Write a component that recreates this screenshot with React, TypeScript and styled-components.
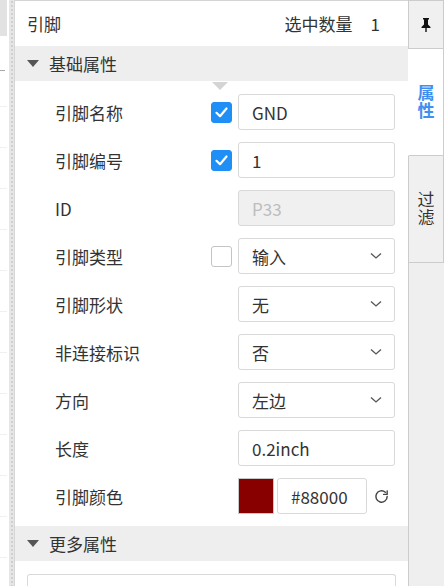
import styled, { createGlobalStyle } from "styled-components";

const GlobalStyle = createGlobalStyle`
  html, body {
    margin: 0;
    padding: 0;
    background: #ffffff;
  }
  body {
    font-family: "Noto Sans CJK SC", "Noto Sans", "Liberation Sans", sans-serif;
    color: #333333;
  }
  * { box-sizing: border-box; }
`;

const Page = styled.div`
  display: flex;
  width: 444px;
  height: 586px;
  overflow: hidden;
  background: #ffffff;
`;

const LeftStrip = styled.div`
  width: 9px;
  display: flex;
  flex-direction: column;
  flex-shrink: 0;
  & > * { flex-shrink: 0; }
`;

const StripTop = styled.div`
  height: 36px;
  width: 7px;
  background: #e2e2e2;
`;

const StripMark = styled.div`
  margin-top: 34px;
  height: 1px;
  width: 5px;
  background: #a8a8a8;
`;

const StripLine = styled.div<{ $first?: boolean }>`
  margin-top: ${(p) => (p.$first ? "35px" : "40px")};
  height: 1px;
  width: 7px;
  background: #f0f0f0;
`;

const Splitter = styled.div`
  width: 6px;
  flex-shrink: 0;
  background-color: #e6e6e6;
  background-image: radial-gradient(circle, #cfcfcf 1px, transparent 1.2px);
  background-size: 6px 4px;
  border-right: 1px solid #d6d6d6;
`;

const Panel = styled.div`
  position: relative;
  flex: 1;
  display: flex;
  flex-direction: column;
  border-top: 1px solid #d4d4d4;
  overflow: hidden;
  & > * { flex-shrink: 0; }
`;

const Header = styled.div`
  height: 45px;
  display: flex;
  align-items: center;
  justify-content: space-between;
  padding: 0 28px 0 12px;
  font-size: 17px;
`;

const Count = styled.div`
  display: flex;
  gap: 18px;
`;

const SectionHeader = styled.div`
  height: 35px;
  display: flex;
  align-items: center;
  gap: 10px;
  padding-left: 12px;
  background: #eeeeee;
  font-size: 17px;
  color: #333;
`;

const Caret = styled.span`
  width: 0;
  height: 0;
  border-left: 6px solid transparent;
  border-right: 6px solid transparent;
  border-top: 7px solid #555;
`;

const Pointer = styled.span`
  position: absolute;
  left: 197px;
  top: 81px;
  width: 0;
  height: 0;
  border-left: 8px solid transparent;
  border-right: 8px solid transparent;
  border-top: 8px solid #d4d4d4;
`;

const Body = styled.div`
  display: flex;
  flex-direction: column;
  gap: 12px;
  padding: 13px 12px 12px 40px;
`;

const Row = styled.div`
  display: flex;
  align-items: center;
  height: 36px;
`;

const Label = styled.div`
  width: 156px;
  font-size: 17px;
  color: #333;
`;

const CheckSlot = styled.div`
  width: 27px;
  display: flex;
`;

const Check = styled.span<{ $on?: boolean }>`
  width: 21px;
  height: 21px;
  border-radius: 3px;
  display: flex;
  align-items: center;
  justify-content: center;
  background: ${(p) => (p.$on ? "#1f8ff5" : "#ffffff")};
  border: 1px solid ${(p) => (p.$on ? "#1f8ff5" : "#c4c4c4")};
`;

const Field = styled.div<{ $disabled?: boolean; $width?: number }>`
  width: ${(p) => p.$width ?? 157}px;
  height: 36px;
  display: flex;
  align-items: center;
  gap: 6px;
  padding: 0 12px 0 13px;
  border: 1px solid #d9d9d9;
  border-radius: 3px;
  font-size: 17px;
  background: ${(p) => (p.$disabled ? "#f0f0f0" : "#ffffff")};
  color: ${(p) => (p.$disabled ? "#bdbdbd" : "#333")};
  white-space: nowrap;
`;

const Value = styled.span`
  flex: 1;
  min-width: 0;
  overflow: hidden;
`;

const Swatch = styled.div`
  width: 36px;
  height: 36px;
  background: #880000;
  border: 1px solid #c8c8c8;
  margin-right: 3px;
`;

const ResetButton = styled.span`
  margin-left: 6px;
  display: flex;
  color: #444;
`;

const MoreBox = styled.div`
  margin: 13px 12px 0 12px;
  height: 40px;
  border: 1px solid #d9d9d9;
  border-bottom: none;
  border-radius: 3px 3px 0 0;
`;

const TabColumn = styled.div`
  width: 36px;
  flex-shrink: 0;
  display: flex;
  flex-direction: column;
  background: #efefef;
  border-left: 1px solid #cccccc;
  & > * { flex-shrink: 0; }
`;

const PinBox = styled.div`
  height: 49px;
  margin-left: -1px;
  display: flex;
  align-items: center;
  justify-content: center;
  background: #f0f0f0;
  border: 1px solid #cccccc;
`;

const Tab = styled.div<{ $active?: boolean }>`
  height: 107px;
  margin-left: -1px;
  display: flex;
  align-items: center;
  justify-content: center;
  writing-mode: vertical-rl;
  font-size: 17px;
  line-height: 1;
  letter-spacing: 1px;
  font-weight: ${(p) => (p.$active ? 700 : 400)};
  color: ${(p) => (p.$active ? "#3f8ff0" : "#333")};
  background: ${(p) => (p.$active ? "#ffffff" : "#f0f0f0")};
  border-right: 1px solid #cccccc;
  border-bottom: 1px solid #cccccc;
  border-left: 1px solid ${(p) => (p.$active ? "#ffffff" : "#cccccc")};
`;

const CheckMark = () => (
  <svg width="13" height="11" viewBox="0 0 13 11">
    <path d="M1.5 5.8 L5 9.2 L11.5 1.5" fill="none" stroke="#fff" strokeWidth="2.2" strokeLinecap="round" strokeLinejoin="round" />
  </svg>
);

const Chevron = () => (
  <svg width="12" height="8" viewBox="0 0 12 8">
    <path d="M1 1.5 L6 6 L11 1.5" fill="none" stroke="#555" strokeWidth="1.3" />
  </svg>
);

const Refresh = () => (
  <svg width="17" height="17" viewBox="0 0 24 24" fill="none" stroke="currentColor" strokeWidth="2" strokeLinecap="round" strokeLinejoin="round">
    <path d="M20 12a8 8 0 1 1-2.6-5.9" />
    <path d="M20 4v5h-5" />
  </svg>
);

const Pin = () => (
  <svg width="12" height="16" viewBox="0 0 12 16">
    <path d="M3 1h6v1.5H8v5l2.5 2.5v1H6.7V15H5.3v-4H1.5v-1L4 7.5v-5H3z" fill="#111" />
  </svg>
);

type RowSpec = {
  label: string;
  check?: boolean | null;
  value: string;
  select?: boolean;
  disabled?: boolean;
};

const rows: RowSpec[] = [
  { label: "引脚名称", check: true, value: "GND" },
  { label: "引脚编号", check: true, value: "1" },
  { label: "ID", check: null, value: "P33", disabled: true },
  { label: "引脚类型", check: false, value: "输入", select: true },
  { label: "引脚形状", check: null, value: "无", select: true },
  { label: "非连接标识", check: null, value: "否", select: true },
  { label: "方向", check: null, value: "左边", select: true },
  { label: "长度", check: null, value: "0.2inch" },
];

export default function App() {
  return (
    <Page>
      <GlobalStyle />
      <LeftStrip>
        <StripTop />
        <StripMark />
        <StripLine $first />
        {Array.from({ length: 11 }).map((_, i) => (
          <StripLine key={i} />
        ))}
      </LeftStrip>
      <Splitter />
      <Panel>
        <Header>
          <span>引脚</span>
          <Count>
            <span>选中数量</span>
            <span>1</span>
          </Count>
        </Header>
        <SectionHeader>
          <Caret />
          基础属性
        </SectionHeader>
        <Pointer />
        <Body>
          {rows.map((r) => (
            <Row key={r.label}>
              <Label>{r.label}</Label>
              <CheckSlot>
                {r.check !== null && r.check !== undefined && (
                  <Check $on={r.check}>{r.check && <CheckMark />}</Check>
                )}
              </CheckSlot>
              <Field $disabled={r.disabled}>
                <Value>{r.value}</Value>
                {r.select && <Chevron />}
              </Field>
            </Row>
          ))}
          <Row>
            <Label>引脚颜色</Label>
            <CheckSlot />
            <Swatch />
            <Field $width={90}>
              <Value>#88000</Value>
            </Field>
            <ResetButton>
              <Refresh />
            </ResetButton>
          </Row>
        </Body>
        <SectionHeader>
          <Caret />
          更多属性
        </SectionHeader>
        <MoreBox />
      </Panel>
      <TabColumn>
        <PinBox>
          <Pin />
        </PinBox>
        <Tab $active>属性</Tab>
        <Tab>过滤</Tab>
      </TabColumn>
    </Page>
  );
}
